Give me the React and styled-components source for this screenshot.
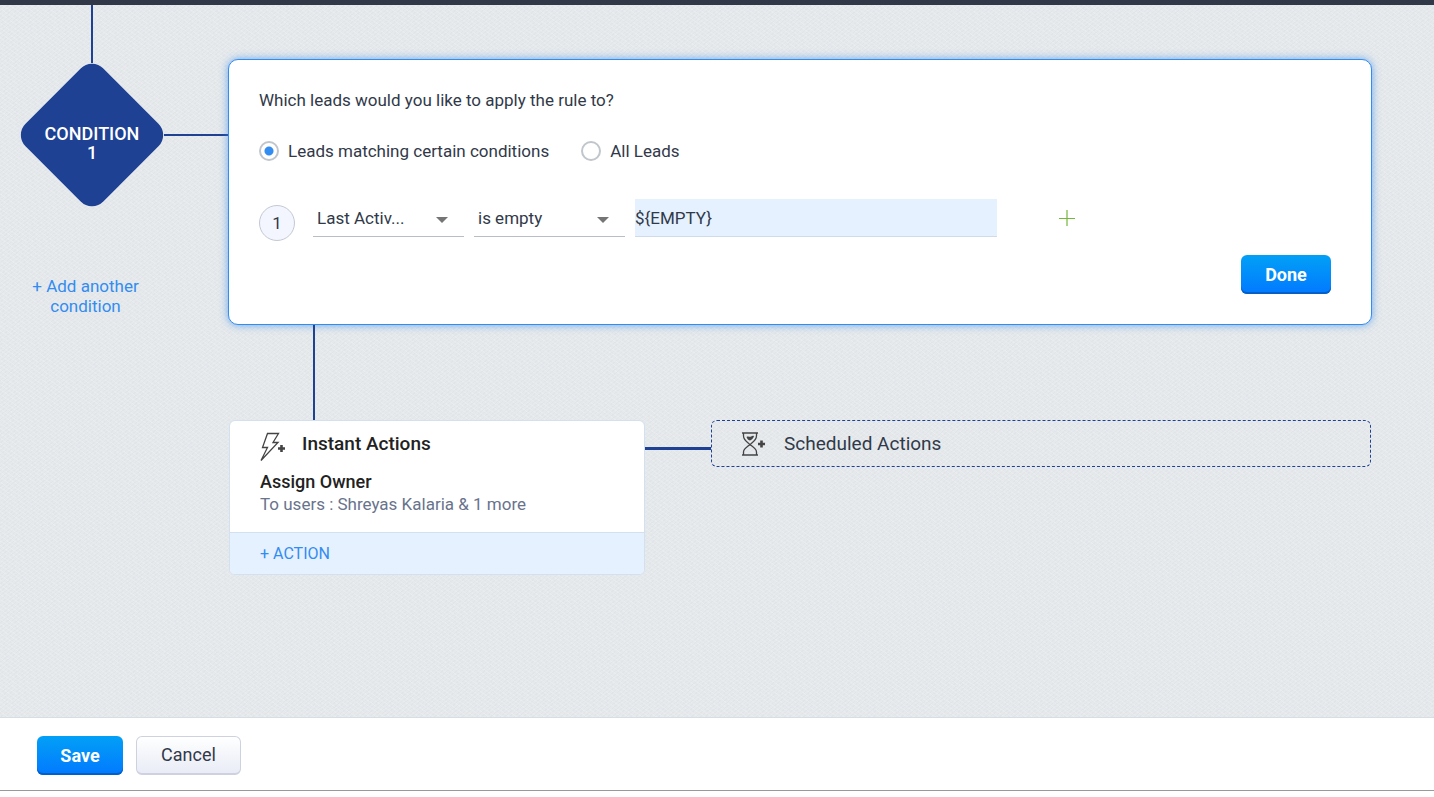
import { useState } from 'react';
import styled, { createGlobalStyle, css } from 'styled-components';

const GlobalStyle = createGlobalStyle`
  * {
    box-sizing: border-box;
  }

  body {
    margin: 0;
    background: #fff;
    color: #313949;
    font-family: Roboto, "Liberation Sans", sans-serif;
    font-size: 17px;
    line-height: 20px;
  }

  button,
  input,
  select {
    font: inherit;
    color: inherit;
  }
`;

const Page = styled.div`
  display: flex;
  flex-direction: column;
  min-height: 100vh;
  padding-bottom: 6px;
`;

const TopBar = styled.div`
  height: 5px;
  background: #313949;
`;

const Canvas = styled.main`
  flex: 1;
  display: flex;
  align-items: flex-start;
  padding-right: 62px;
  background-color: #e5e9ec;
  background-image:
    repeating-linear-gradient(35deg, rgba(255, 255, 255, 0.16) 0 1px, transparent 1px 4px),
    repeating-linear-gradient(-40deg, rgba(90, 105, 120, 0.03) 0 1px, transparent 1px 3px);
`;

const Rail = styled.section`
  display: flex;
  flex-direction: column;
  align-items: center;
  width: 144px;
  margin-left: 20px;
`;

const VerticalLine = styled.div`
  width: 2px;
  height: ${({ $height }) => $height}px;
  background: #1e4193;
`;

const HorizontalLine = styled.div`
  flex: none;
  width: ${({ $width }) => $width}px;
  height: ${({ $thick }) => ($thick ? 3 : 2)}px;
  margin-top: ${({ $top }) => $top}px;
  background: #1e4193;
`;

const Diamond = styled.h2`
  display: grid;
  place-items: center;
  width: 144px;
  height: 144px;
  margin: 0;
  color: #fff;
  font-size: 18px;
  font-weight: 500;
  line-height: 19px;
  text-align: center;

  &::before {
    content: '';
    grid-area: 1 / 1;
    width: 110px;
    height: 110px;
    border-radius: 16px;
    background: #1e4193;
    transform: rotate(45deg);
  }

  span {
    grid-area: 1 / 1;
    z-index: 1;
    width: 100px;
    padding-top: 16px;
  }
`;

const AddCondition = styled.button`
  width: 132px;
  margin: 69px 13px 0 0;
  padding: 0;
  border: 0;
  background: none;
  color: #338cf0;
  line-height: 20px;
  cursor: pointer;
`;

const Flow = styled.div`
  flex: 1;
  min-width: 0;
  padding-top: 54px;

  > ${VerticalLine} {
    margin-left: 85px;
  }
`;

const ConditionPanel = styled.form`
  padding: 30px 40px 30px 30px;
  border: 1px solid #338cf0;
  border-radius: 10px;
  background: #fff;
  box-shadow: 0 0 8px rgba(51, 140, 240, 0.7);
`;

const Question = styled.p`
  margin: 0;
`;

const RadioRow = styled.div`
  display: flex;
  gap: 32px;
  margin-top: 31px;
`;

const RadioLabel = styled.label`
  display: flex;
  align-items: center;
  gap: 9px;
`;

const Radio = styled.input`
  appearance: none;
  width: 20px;
  height: 20px;
  margin: 0;
  border: 2px solid #c0c6cc;
  border-radius: 50%;
  background: #fff;

  &:checked {
    background: radial-gradient(circle, #338cf0 4px, #fff 5px);
  }
`;

const CriteriaRow = styled.div`
  display: flex;
  align-items: center;
  margin-top: 38px;
`;

const RowNumber = styled.span`
  display: flex;
  align-items: center;
  justify-content: center;
  width: 36px;
  height: 36px;
  margin: 6px 18px 0 0;
  border: 1px solid #c3c8d4;
  border-radius: 50%;
  background: #f3f6ff;
`;

const SelectBox = styled.div`
  display: grid;
  align-items: center;
  width: 151px;
  margin: 0 10px 4px 0;

  svg {
    grid-area: 1 / 1;
    justify-self: end;
    margin: 3px 16px 0 0;
    pointer-events: none;
  }
`;

const Select = styled.select`
  grid-area: 1 / 1;
  appearance: none;
  width: 100%;
  height: 38px;
  padding: 0 30px 0 4px;
  border: 0;
  border-bottom: 1px solid #b9bec6;
  border-radius: 0;
  background: transparent;
`;

const ValueInput = styled.input`
  flex: 0 1 362px;
  min-width: 0;
  height: 38px;
  margin-bottom: 4px;
  padding: 0;
  border: 0;
  border-bottom: 1px solid #cfdbe8;
  background: #e5f1ff;
`;

const AddRow = styled.button`
  display: flex;
  margin: 0 0 4px 61px;
  padding: 0;
  border: 0;
  background: none;
  cursor: pointer;
`;

const PanelFooter = styled.div`
  display: flex;
  justify-content: flex-end;
  margin-top: 14px;
`;

const primary = css`
  padding: 0 20px;
  border: 0;
  background: linear-gradient(#02a0f6, #0279ff);
  box-shadow: inset 0 -2px 0 #0460c8;
  color: #fff;
  font-weight: 700;
`;

const secondary = css`
  padding: 0 20px;
  border: 1px solid #ced1e0;
  border-bottom-width: 2px;
  background: linear-gradient(#fff, #e9ecf6);
`;

const Button = styled.button`
  height: 39px;
  min-width: ${({ $minWidth }) => $minWidth}px;
  border-radius: 6px;
  font-size: 18px;
  cursor: pointer;
  ${({ $primary }) => ($primary ? primary : secondary)}
`;

const ActionsRow = styled.div`
  display: flex;
  align-items: flex-start;
  padding: 0 1px;
`;

const InstantCard = styled.section`
  flex: none;
  width: 416px;
  overflow: hidden;
  border: 1px solid #d3e0ef;
  border-radius: 6px;
  background: #fff;
`;

const CardBody = styled.div`
  padding: 11px 30px 17px;
`;

const CardTitle = styled.h3`
  display: flex;
  align-items: flex-start;
  gap: ${({ $gap }) => $gap}px;
  margin: 0;
  color: ${({ $dark }) => ($dark ? '#222' : 'inherit')};
  font-size: 19px;
  font-weight: ${({ $dark }) => ($dark ? 500 : 400)};
  line-height: 24px;
`;

const ActionName = styled.h4`
  margin: 9px 0 0;
  color: #222;
  font-size: 18px;
  font-weight: 500;
  line-height: 22px;
`;

const ActionDetail = styled.p`
  margin: 0;
  color: #68738c;
  line-height: 22px;
`;

const AddAction = styled.button`
  display: block;
  width: 100%;
  height: 42px;
  padding: 0 30px;
  border: 0;
  border-top: 1px solid #d3e0ef;
  background: #e5f1ff;
  color: #338cf0;
  font-size: 16px;
  text-align: left;
  cursor: pointer;
`;

const ScheduledCard = styled.section`
  flex: 1;
  min-width: 0;
  height: 47px;
  padding: 11px 29px;
  border: 1px dashed #1e4193;
  border-radius: 6px;
`;

const Footer = styled.footer`
  display: flex;
  gap: 13px;
  padding: 18px 37px 15px;
  border-top: 1px solid #d8dde3;
  border-bottom: 1px solid #97999c;
  background: #fff;
`;

const Caret = () => (
  <svg width="12" height="6" viewBox="0 0 12 6" aria-hidden="true">
    <path d="M0 0h12L6 6z" fill="#757575" />
  </svg>
);

const BoltIcon = () => (
  <svg width="26" height="30" viewBox="0 0 26 30" fill="none" aria-hidden="true">
    <path d="M7.500 1.500h11l-5.500 9h5L1 28.500l6.500-13H2.500z" stroke="#444" strokeWidth="1.300" />
    <path d="M21.500 13v7M18 16.500h7" stroke="#444" strokeWidth="2.600" />
  </svg>
);

const HourglassIcon = () => (
  <svg width="25" height="24" viewBox="0 0 25 24" fill="none" aria-hidden="true">
    <path
      d="M1 1h16M1 23h16M2.500 1v3c0 4 3 5.500 6.500 8.500C5.500 15.500 2.500 17 2.500 20v3M15.500 1v3c0 4-3 5.500-6.500 8.500 3.500 3 6.500 4.500 6.500 7.500v3"
      stroke="#444"
      strokeWidth="1.300"
    />
    <path d="M5.500 5c2-1.500 3 .5 4.500-.5S12 3.500 13 4c-.5 2-2 3.500-4 4.500C7 8 6 6.500 5.500 5z" fill="#444" />
    <path d="M20.500 8.500v7M17 12h7" stroke="#444" strokeWidth="2.600" />
  </svg>
);

const App = () => {
  const [scope, setScope] = useState('matching');
  const [value, setValue] = useState('${EMPTY}');

  return (
    <Page>
      <GlobalStyle />
      <TopBar />
      <Canvas>
        <Rail>
          <VerticalLine $height={58} />
          <Diamond>
            <span>CONDITION 1</span>
          </Diamond>
          <AddCondition type="button">+ Add another condition</AddCondition>
        </Rail>
        <HorizontalLine $width={64} $top={129} />

        <Flow>
          <ConditionPanel onSubmit={(e) => e.preventDefault()}>
            <Question>Which leads would you like to apply the rule to?</Question>
            <RadioRow role="radiogroup">
              <RadioLabel>
                <Radio
                  type="radio"
                  name="scope"
                  checked={scope === 'matching'}
                  onChange={() => setScope('matching')}
                />
                Leads matching certain conditions
              </RadioLabel>
              <RadioLabel>
                <Radio
                  type="radio"
                  name="scope"
                  checked={scope === 'all'}
                  onChange={() => setScope('all')}
                />
                All Leads
              </RadioLabel>
            </RadioRow>

            <CriteriaRow>
              <RowNumber>1</RowNumber>
              <SelectBox>
                <Select aria-label="Field">
                  <option>Last Activ...</option>
                </Select>
                <Caret />
              </SelectBox>
              <SelectBox>
                <Select aria-label="Operator">
                  <option>is empty</option>
                </Select>
                <Caret />
              </SelectBox>
              <ValueInput
                type="text"
                aria-label="Value"
                value={value}
                onChange={(e) => setValue(e.target.value)}
              />
              <AddRow type="button" aria-label="Add criteria">
                <svg width="18" height="18" viewBox="0 0 18 18" aria-hidden="true">
                  <path d="M9 1v16M1 9.500h16" stroke="#74b73c" strokeWidth="1.200" />
                </svg>
              </AddRow>
            </CriteriaRow>

            <PanelFooter>
              <Button $primary $minWidth={90} type="submit">Done</Button>
            </PanelFooter>
          </ConditionPanel>

          <VerticalLine $height={95} />

          <ActionsRow>
            <InstantCard>
              <CardBody>
                <CardTitle $dark $gap={16}>
                  <BoltIcon />
                  Instant Actions
                </CardTitle>
                <ActionName>Assign Owner</ActionName>
                <ActionDetail>To users : Shreyas Kalaria &amp; 1 more</ActionDetail>
              </CardBody>
              <AddAction type="button">+ ACTION</AddAction>
            </InstantCard>
            <HorizontalLine $width={66} $top={27} $thick />
            <ScheduledCard>
              <CardTitle $gap={18}>
                <HourglassIcon />
                Scheduled Actions
              </CardTitle>
            </ScheduledCard>
          </ActionsRow>
        </Flow>
      </Canvas>

      <Footer>
        <Button $primary $minWidth={86} type="button">Save</Button>
        <Button $minWidth={105} type="button">Cancel</Button>
      </Footer>
    </Page>
  );
};

export default App;
